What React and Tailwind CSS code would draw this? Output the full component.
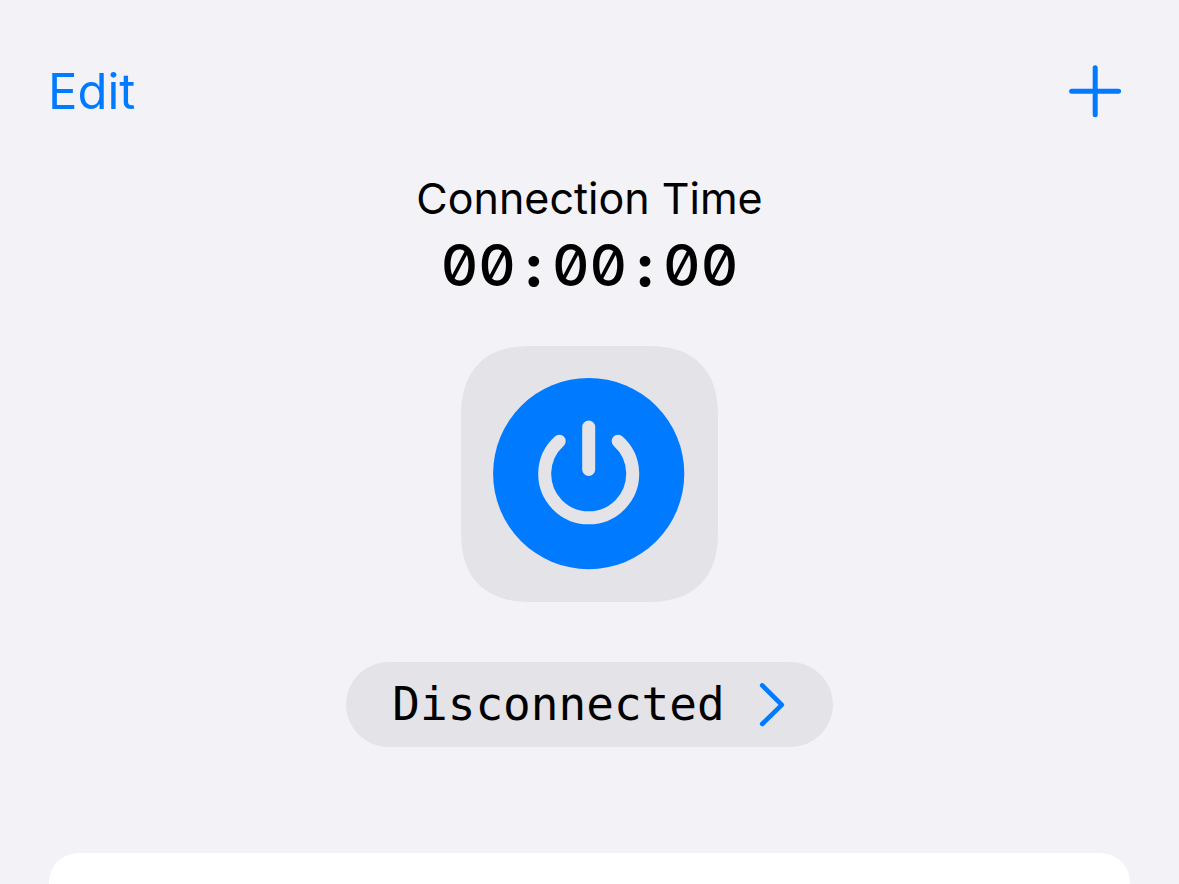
function PlusIcon() {
  return (
    <svg viewBox="0 0 52 56" className="h-14 w-[52px]" fill="none" stroke="currentColor" strokeWidth="5" strokeLinecap="round" aria-hidden="true">
      <path d="M26.2 3.7v47M2.6 27.2h47" />
    </svg>
  );
}

function PowerIcon() {
  return (
    <svg viewBox="0 0 192 192" className="size-48" fill="none" aria-hidden="true">
      <circle cx="95.7" cy="95.6" r="95.6" fill="#007aff" />
      <g stroke="#e4e3e8" strokeWidth="13" strokeLinecap="round">
        <path d="M95.7 49v42.5" />
        <path d="M66.2 63.2a44 44 0 1 0 59 0" />
      </g>
    </svg>
  );
}

function ChevronIcon() {
  return (
    <svg viewBox="0 0 26 44" className="h-11 w-[26px] text-[#007aff]" fill="none" stroke="currentColor" strokeWidth="4.6" strokeLinecap="round" strokeLinejoin="round" aria-hidden="true">
      <path d="M3.2 2.4l19.6 19.4L3.2 41" />
    </svg>
  );
}

export default function App() {
  return (
    <div className="flex min-h-screen flex-col bg-[#f2f2f7] font-['Inter',sans-serif] text-black">
      <header className="flex items-center justify-between pt-14 pr-[58px] pl-12 text-[#007aff]">
        <button type="button" className="text-[49px] leading-[72px]">Edit</button>
        <button type="button" aria-label="Add">
          <PlusIcon />
        </button>
      </header>

      <main className="flex grow flex-col items-center">
        <h1 className="mt-[42px] text-[43px] leading-[56px]">Connection Time</h1>
        <time className="flex text-[58px] leading-[78px] font-medium slashed-zero tabular-nums">
          <span>00</span>
          <span className="w-9 text-center font-extrabold">:</span>
          <span>00</span>
          <span className="w-9 text-center font-extrabold">:</span>
          <span>00</span>
        </time>
        <button
          type="button"
          aria-label="Toggle connection"
          className="mt-[42px] rounded-[72px] bg-[#e4e3e8] py-8 pr-[33px] pl-8 [corner-shape:superellipse(1.3)]"
        >
          <PowerIcon />
        </button>
        <button
          type="button"
          className="mt-15 flex items-center gap-[34px] rounded-full bg-[#e4e3e8] py-2 pr-12 pl-[46px]"
        >
          <span className="font-['DejaVu_Sans_Mono',monospace] text-[46px] leading-[69px]">Disconnected</span>
          <ChevronIcon />
        </button>
        <section aria-label="Servers" className="mt-[106px] grow self-stretch px-[49px]">
          <div className="h-full min-h-8 rounded-t-[38px] bg-white [corner-shape:superellipse(1.15)]" />
        </section>
      </main>
    </div>
  );
}
